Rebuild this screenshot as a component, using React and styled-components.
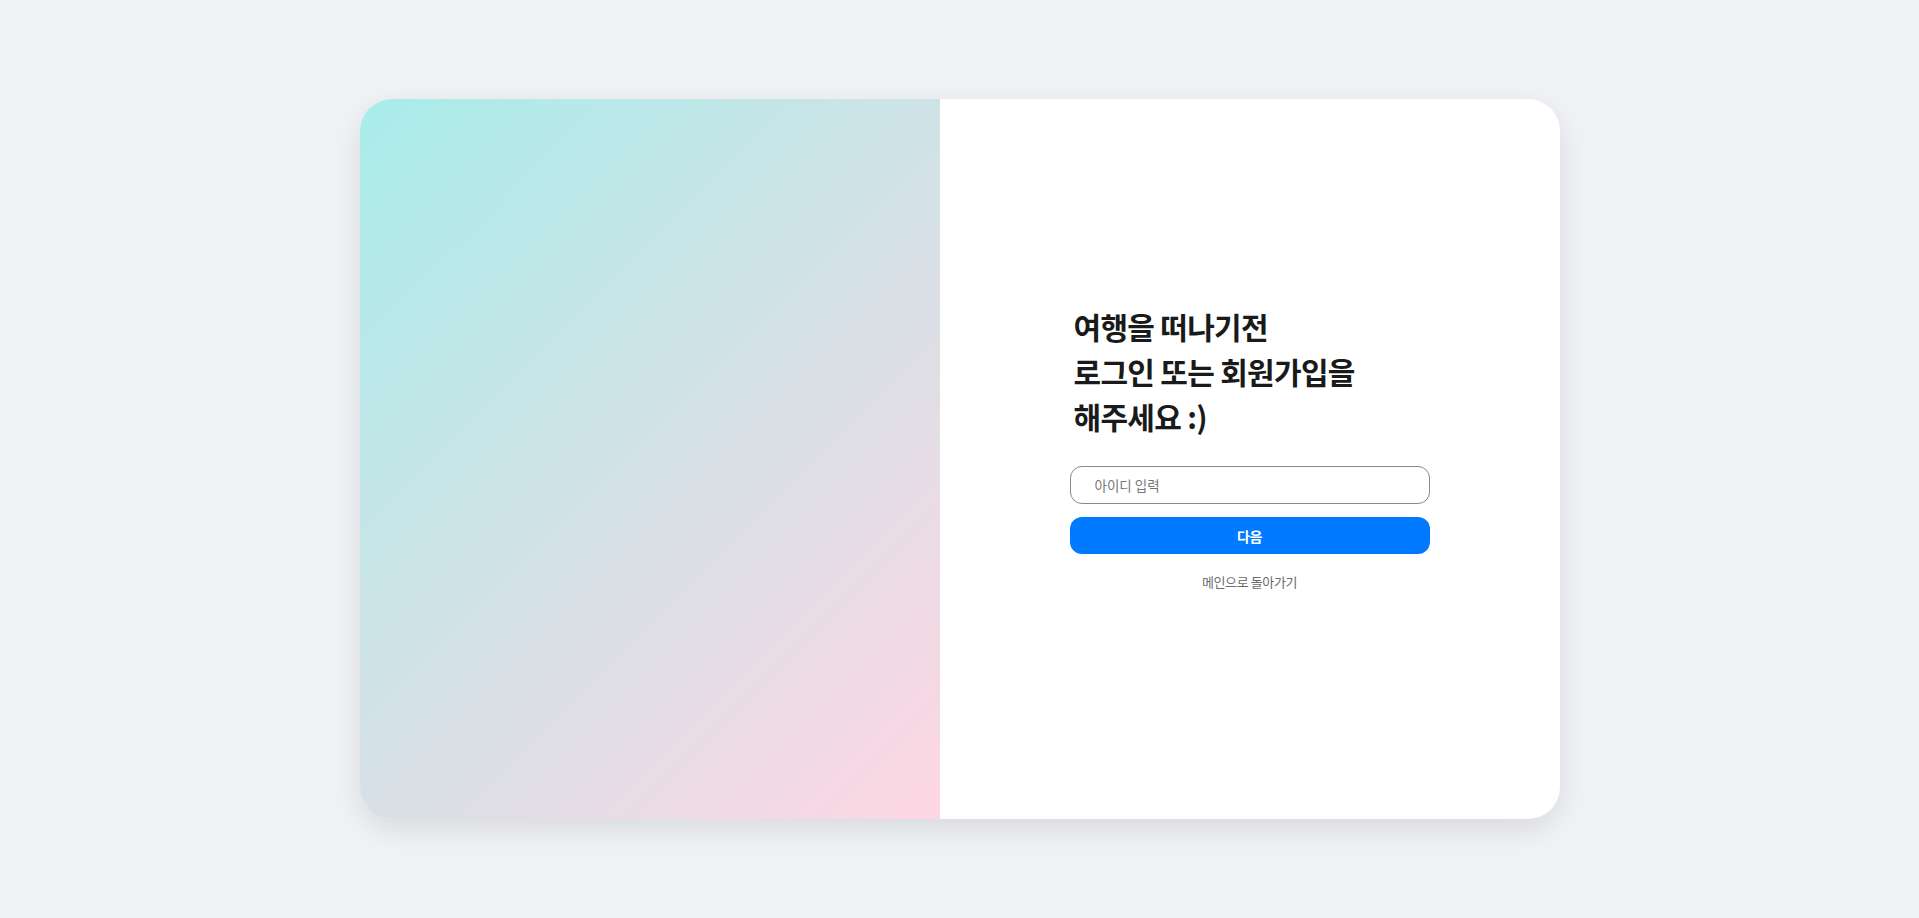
import React from "react";
import styled, { createGlobalStyle } from "styled-components";

const Global = createGlobalStyle`
  html, body { margin: 0; padding: 0; }
  body {
    background: #f0f2f5;
    font-family: "Noto Sans CJK KR", "Noto Sans", sans-serif;
  }
`;

const Page = styled.div`
  min-height: 918px;
  display: flex;
  align-items: center;
  justify-content: center;
`;

const Card = styled.div`
  width: 1200px;
  height: 720px;
  display: flex;
  border-radius: 32px;
  overflow: hidden;
  background: #fff;
  box-shadow: 0 10px 30px rgba(0, 0, 0, 0.1);
`;

const Visual = styled.div`
  width: 580px;
  flex-shrink: 0;
  background: linear-gradient(135deg, #a8edea 0%, #fed6e3 100%);
`;

const FormSide = styled.div`
  flex: 1;
  display: flex;
  align-items: center;
  justify-content: center;
`;

const Form = styled.form`
  width: 360px;
  display: flex;
  flex-direction: column;
  margin-top: -23px;
`;

const Title = styled.h1`
  margin: 0 0 27px 4px;
  font-size: 30px;
  line-height: 45px;
  font-weight: 700;
  letter-spacing: -0.7px;
  color: #1a1a1a;
`;

const Input = styled.input`
  box-sizing: border-box;
  height: 38px;
  width: 100%;
  padding: 0 24px;
  border: 1px solid #8a8a8a;
  border-radius: 12px;
  font-family: inherit;
  font-size: 13.5px;
  color: #222;
  outline: none;
  &::placeholder { color: #777; }
`;

const Button = styled.button`
  margin-top: 13px;
  height: 37px;
  border: none;
  border-radius: 12px;
  background: #007bff;
  color: #fff;
  font-family: inherit;
  font-size: 14px;
  font-weight: 700;
  letter-spacing: -0.02em;
  cursor: pointer;
`;

const BackLink = styled.a`
  margin-top: 18px;
  align-self: center;
  font-size: 13px;
  font-weight: 400;
  color: #6b6b6b;
  text-decoration: none;
  letter-spacing: -0.03em;
  cursor: pointer;
`;

export default function App() {
  return (
    <>
      <Global />
      <Page>
        <Card>
          <Visual />
          <FormSide>
            <Form onSubmit={(e) => e.preventDefault()}>
              <Title>
                여행을 떠나기전
                <br />
                로그인 또는 회원가입을
                <br />
                해주세요 :)
              </Title>
              <Input placeholder="아이디 입력" autoFocus />
              <Button type="submit">다음</Button>
              <BackLink>메인으로 돌아가기</BackLink>
            </Form>
          </FormSide>
        </Card>
      </Page>
    </>
  );
}
